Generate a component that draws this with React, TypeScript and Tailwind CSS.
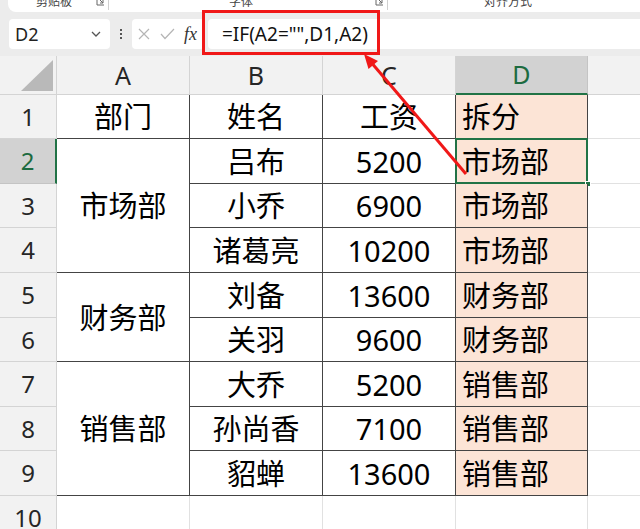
import React from 'react'

const FONT = "font-['Noto_Sans','Noto_Sans_CJK_SC',sans-serif]"

type Row = { n: number; a?: string; span?: number; b?: string; c?: string; d?: string }

// 表格数据：A 列为合并单元格
const rows: Row[] = [
  { n: 1, a: '部门', span: 1, b: '姓名', c: '工资', d: '拆分' },
  { n: 2, a: '市场部', span: 3, b: '吕布', c: '5200', d: '市场部' },
  { n: 3, b: '小乔', c: '6900', d: '市场部' },
  { n: 4, b: '诸葛亮', c: '10200', d: '市场部' },
  { n: 5, a: '财务部', span: 2, b: '刘备', c: '13600', d: '财务部' },
  { n: 6, b: '关羽', c: '9600', d: '财务部' },
  { n: 7, a: '销售部', span: 3, b: '大乔', c: '5200', d: '销售部' },
  { n: 8, b: '孙尚香', c: '7100', d: '销售部' },
  { n: 9, b: '貂蝉', c: '13600', d: '销售部' },
]

function Launcher() {
  return (
    <svg width="9" height="9" viewBox="0 0 9 9" className="-mt-[1px]">
      <path d="M1 0 V8 H8" fill="none" stroke="#666" strokeWidth="1" />
      <path d="M3 2 L7 6 M7 3 V6 H4" fill="none" stroke="#666" strokeWidth="1" />
    </svg>
  )
}

function Ribbon() {
  return (
    <div className="h-[12px] pl-[8px] bg-[#ececec]">
      <div className="h-[12px] bg-white rounded-bl-[8px] overflow-hidden flex items-start text-[12px] leading-[14px] text-[#444]">
        <span className="ml-[28px] -mt-[5px]">剪贴板</span>
        <span className="ml-[24px] -mt-[2px]"><Launcher /></span>
        <span className="ml-[3px] w-px h-[10px] bg-[#d0d0d0]" />
        <span className="ml-[120px] -mt-[5px]">字体</span>
        <span className="ml-[122px] -mt-[2px]"><Launcher /></span>
        <span className="ml-[3px] w-px h-[10px] bg-[#d0d0d0]" />
        <span className="ml-[96px] -mt-[5px]">对齐方式</span>
      </div>
    </div>
  )
}

function FormulaBar() {
  return (
    <div className="h-[44px] bg-[#ececec] flex items-start pt-[7px] pl-[9px]">
      <div className="w-[101px] h-[30px] bg-white rounded-[4px] flex items-center justify-between pl-[6px] pr-[9px]">
        <span className="text-[18px] text-[#222] leading-none">D2</span>
        <svg width="10" height="6" viewBox="0 0 10 6">
          <path d="M1 1 L5 5 L9 1" fill="none" stroke="#555" strokeWidth="1.3" />
        </svg>
      </div>
      <div className="ml-[9px] w-[4px] h-[30px] flex flex-col items-center justify-center gap-[2px]">
        <span className="w-[2px] h-[2px] bg-[#555]" />
        <span className="w-[2px] h-[2px] bg-[#555]" />
        <span className="w-[2px] h-[2px] bg-[#555]" />
      </div>
      <div className="ml-[9px] w-[72px] h-[30px] bg-white rounded-[4px] flex items-center pl-[6px]">
        <svg width="12" height="12" viewBox="0 0 12 12">
          <path d="M1 1 L11 11 M11 1 L1 11" stroke="#b5b5b5" strokeWidth="1.2" />
        </svg>
        <svg width="15" height="12" viewBox="0 0 15 12" className="ml-[10px]">
          <path d="M1 6 L5 10.5 L14 1" fill="none" stroke="#b5b5b5" strokeWidth="1.2" />
        </svg>
        <span className="ml-[9px] font-['Liberation_Serif',serif] italic text-[18px] text-[#333] leading-none">fx</span>
      </div>
      <div className="ml-[4px] flex-1 h-[30px] bg-white rounded-l-[4px] flex items-center pl-[14px] text-[19px] text-[#111] leading-none">
        =IF(A2="",D1,A2)
      </div>
    </div>
  )
}

const hdr = 'bg-[#f2f2f2] border-r border-b border-[#d4d4d4] flex items-center justify-center text-[#262626]'
const dark = 'border-r border-b border-[#444]'
const light = 'border-r border-b border-[#e1e1e1]'

function Sheet() {
  const cells: React.ReactNode[] = []
  // 表头
  cells.push(
    <div key="corner" className={`${hdr} relative`}>
      <svg width="33" height="32" viewBox="0 0 33 32" className="absolute left-[21px] top-[4px]">
        <path d="M32 0 V31 H0 Z" fill="#b9b9b9" />
      </svg>
    </div>
  )
  ;['A', 'B', 'C'].forEach(l =>
    cells.push(
      <div key={l} className={`${hdr} text-[25px]`}>{l}</div>
    )
  )
  cells.push(
    <div key="D" className="bg-[#d2d2d2] border-r border-[#c4c4c4] border-b-2 border-b-[#217346] flex items-center justify-center text-[25px] text-[#1d6b40]">D</div>
  )
  cells.push(<div key="E" className={`${hdr}`} />)

  rows.forEach(r => {
    const sel = r.n === 2
    cells.push(
      <div
        key={`h${r.n}`}
        className={
          sel
            ? 'bg-[#d2d2d2] border-b border-[#c4c4c4] border-r-2 border-r-[#217346] flex items-center justify-center text-[24px] text-[#1d6b40]'
            : `${hdr} text-[24px]`
        }
      >
        {r.n}
      </div>
    )
    if (r.a) {
      const span = r.span === 3 ? 'row-span-3' : r.span === 2 ? 'row-span-2' : ''
      cells.push(
        <div key={`a${r.n}`} className={`${dark} ${span} flex items-center justify-center`}>{r.a}</div>
      )
    }
    cells.push(<div key={`b${r.n}`} className={`${dark} flex items-center justify-center`}>{r.b}</div>)
    cells.push(<div key={`c${r.n}`} className={`${dark} flex items-center justify-center`}>{r.c}</div>)
    cells.push(
      <div key={`d${r.n}`} className={`${dark} bg-[#fce4d6] flex items-center pl-[6px] relative`}>
        {r.d}
        {sel && (
          <>
            <div className="absolute -left-[1px] -top-[1px] -right-[1px] -bottom-[1px] border-2 border-[#217346]" />
            <div className="absolute -right-[4px] -bottom-[4px] w-[6px] h-[6px] bg-[#217346] border border-white" />
          </>
        )}
      </div>
    )
    cells.push(<div key={`e${r.n}`} className={light} />)
  })

  // 第 10 行
  cells.push(<div key="h10" className={`${hdr} text-[24px]`}>10</div>)
  ;['a', 'b', 'c', 'd', 'e'].forEach(k => cells.push(<div key={`${k}10`} className={light} />))

  return (
    <div className="grid grid-cols-[57px_133px_133px_133px_132px_60px] grid-rows-[39px_44px_45px_44px_45px_45px_44px_45px_44px_45px_44px] text-[29px] text-black leading-none">
      {cells}
    </div>
  )
}

export default function App() {
  return (
    <div className={`relative w-[640px] h-[529px] overflow-hidden bg-white ${FONT}`}>
      <Ribbon />
      <FormulaBar />
      <Sheet />

      {/* 红色标注框 */}
      <div className="absolute left-[202px] top-[10px] w-[178px] h-[45px] border-[3px] border-[#f01818]" />

      {/* 红色箭头 */}
      <svg width="640" height="529" className="absolute left-0 top-0 pointer-events-none">
        <line x1="466" y1="174" x2="373" y2="64.5" stroke="#f01818" strokeWidth="3" />
        <polygon points="364,54 378,61 368.5,69" fill="#f01818" />
      </svg>
    </div>
  )
}
